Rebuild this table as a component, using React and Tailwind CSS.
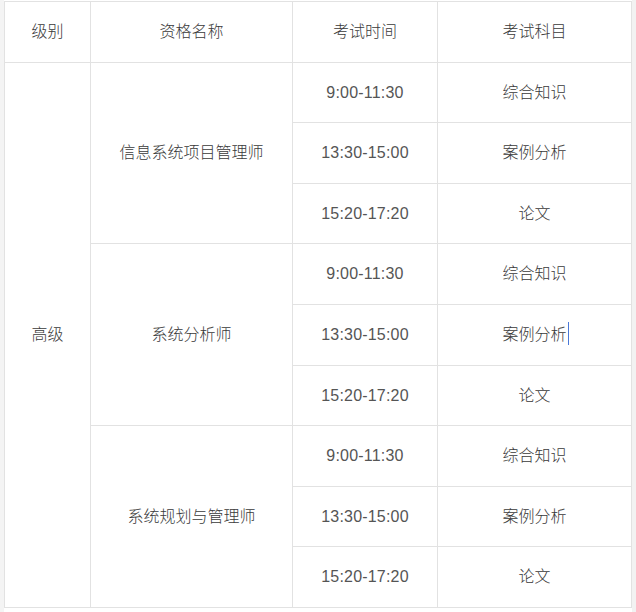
import React from "react";

const groups = ["信息系统项目管理师", "系统分析师", "系统规划与管理师"];
const sessions = [
  ["9:00-11:30", "综合知识"],
  ["13:30-15:00", "案例分析"],
  ["15:20-17:20", "论文"],
];

function Cell({ children, className = "" }) {
  return (
    <div className={"bg-white flex items-center justify-center text-[16px] text-[#3a3a3a] font-light " + className}>
      {children}
    </div>
  );
}

export default function App() {
  const cells = [];
  groups.forEach((g, gi) => {
    cells.push(
      <Cell key={"g" + gi} className={["row-start-2 row-span-3", "row-start-5 row-span-3", "row-start-8 row-span-3"][gi] + " col-start-2"}>
        {g}
      </Cell>
    );
    sessions.forEach((s, si) => {
      const caret = gi === 1 && si === 1;
      cells.push(
        <Cell key={"t" + gi + si} className="col-start-3"><span className="tracking-[0.2px] text-[#555]">{s[0]}</span></Cell>,
        <Cell key={"s" + gi + si} className="col-start-4">
          <span className="relative">
            {s[1]}
            {caret && <span className="absolute right-[-2px] top-[-1px] w-px h-[23px] bg-[#4a78d8]" />}
          </span>
        </Cell>
      );
    });
  });

  return (
    <div
      className="w-[636px] h-[612px] bg-white flex overflow-hidden"
      style={{ fontFamily: '"Liberation Sans", Arial, "Noto Sans CJK SC", sans-serif' }}
    >
      <div className="w-[4px] h-full bg-[#f4f4f4]" />
      <div className="pt-[1px]">
        <div className="grid grid-cols-[85px_201px_144px_193px] grid-rows-[60px_59px_60px_59px_60px_60px_59px_60px_59px_60px] gap-px p-px bg-[#e2e2e2]">
          <Cell>级别</Cell>
          <Cell>资格名称</Cell>
          <Cell>考试时间</Cell>
          <Cell>考试科目</Cell>
          <Cell className="col-start-1 row-start-2 row-span-9">高级</Cell>
          {cells}
        </div>
      </div>
      <div className="flex-1 h-full bg-[#f2f2f2]" />
    </div>
  );
}
